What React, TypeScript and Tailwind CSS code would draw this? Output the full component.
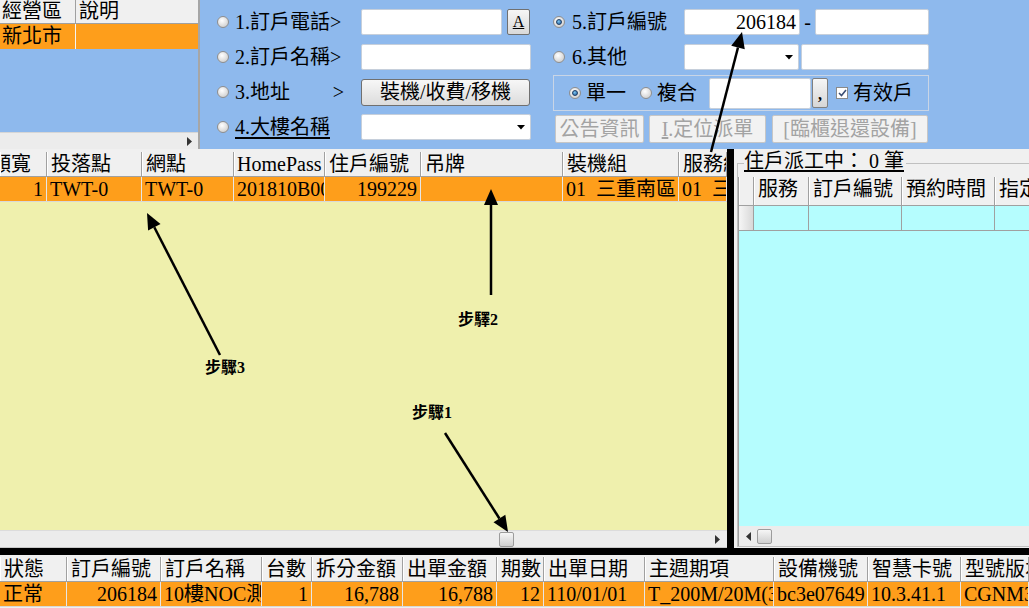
import React from "react";

type Col = { w?: number; t: string; right?: boolean; shift?: number };

const FONT = "font-['Liberation_Serif','Noto_Sans_CJK_TC',serif]";

function Radio({ on }: { on?: boolean }) {
  return (
    <span className="relative inline-block h-[12px] w-[12px] shrink-0 rounded-full border border-[#8e8e8e] bg-[radial-gradient(circle_at_40%_35%,#ffffff,#c4c4c4)]">
      {on && (
        <span className="absolute left-[2px] top-[2px] h-[6px] w-[6px] rounded-full border border-[#1b3c66] bg-[radial-gradient(circle_at_40%_35%,#7cc4f0,#1d5b9c)]" />
      )}
    </span>
  );
}

function Input({ w, h = 26, children }: { w: number; h?: number; children?: React.ReactNode }) {
  return (
    <div
      className="flex shrink-0 items-center justify-end rounded-[2px] border border-[#c6cfdb] bg-white pr-[3px] leading-[24px]"
      style={{ width: w, height: h }}
    >
      {children}
    </div>
  );
}

function Select({ w }: { w: number }) {
  return (
    <div
      className="flex h-[26px] shrink-0 items-center justify-end rounded-[2px] border border-[#c6cfdb] bg-white pr-[5px]"
      style={{ width: w }}
    >
      <svg width="8" height="5" viewBox="0 0 8 5">
        <path d="M0 0H8L4 4.5Z" fill="#000" />
      </svg>
    </div>
  );
}

function ArrowGlyph({ left }: { left?: boolean }) {
  return (
    <svg width="5" height="9" viewBox="0 0 5 9">
      <path d={left ? "M5 0V9L0 4.5Z" : "M0 0V9L5 4.5Z"} fill="#333" />
    </svg>
  );
}

function Thumb() {
  return <div className="h-[15px] w-[15px] rounded-[2px] border border-[#9c9c9c] bg-[linear-gradient(#f6f6f6,#cfcfcf)]" />;
}

function HeadRow({ cols, h = 25 }: { cols: Col[]; h?: number }) {
  return (
    <div className="flex shrink-0 border-b border-[#a0a0a0] bg-[#f0f0f0]" style={{ height: h }}>
      {cols.map((c, i) => (
        <div
          key={i}
          className="shrink-0 overflow-hidden whitespace-nowrap border-l border-white border-r border-r-[#a0a0a0] pl-[3px] leading-[24px]"
          style={c.w ? { width: c.w } : { flex: 1 }}
        >
          <span style={c.shift ? { marginLeft: c.shift } : undefined}>{c.t}</span>
        </div>
      ))}
    </div>
  );
}

function DataRow({ cols, bg = "bg-[#fe9e1b]", h = 25 }: { cols: Col[]; bg?: string; h?: number }) {
  return (
    <div className={`flex shrink-0 border-b border-[#d8d8d8] ${bg}`} style={{ height: h }}>
      {cols.map((c, i) => (
        <div
          key={i}
          className={`shrink-0 overflow-hidden whitespace-pre border-r border-[#e6e6e6] px-[3px] leading-[24px] ${c.right ? "text-right" : ""}`}
          style={c.w ? { width: c.w } : { flex: 1 }}
        >
          {c.t}
        </div>
      ))}
    </div>
  );
}

function Arrow({ x1, y1, x2, y2 }: { x1: number; y1: number; x2: number; y2: number }) {
  const len = Math.hypot(x2 - x1, y2 - y1);
  const ux = (x2 - x1) / len;
  const uy = (y2 - y1) / len;
  const bx = x2 - ux * 16;
  const by = y2 - uy * 16;
  const pts = `${x2},${y2} ${bx - uy * 7},${by + ux * 7} ${bx + uy * 7},${by - ux * 7}`;
  return (
    <g>
      <line x1={x1} y1={y1} x2={bx} y2={by} stroke="#000" strokeWidth={2.5} />
      <polygon points={pts} fill="#000" />
    </g>
  );
}

const mainHead: Col[] = [
  { w: 47, t: "頻寬", shift: -13 },
  { w: 95, t: "投落點" },
  { w: 92, t: "網點" },
  { w: 91, t: "HomePass", shift: -1 },
  { w: 96, t: "住戶編號" },
  { w: 142, t: "吊牌" },
  { w: 116, t: "裝機組" },
  { t: "服務組" },
];
const mainRow: Col[] = [
  { w: 47, t: "1", right: true },
  { w: 95, t: "TWT-0" },
  { w: 92, t: "TWT-0" },
  { w: 91, t: "201810B00" },
  { w: 96, t: "199229", right: true },
  { w: 142, t: "" },
  { w: 116, t: "01  三重南區" },
  { t: "01  三重南區" },
];

const bottomHead: Col[] = [
  { w: 67, t: "狀態" },
  { w: 94, t: "訂戶編號" },
  { w: 101, t: "訂戶名稱" },
  { w: 50, t: "台數" },
  { w: 91, t: "拆分金額" },
  { w: 94, t: "出單金額" },
  { w: 47, t: "期數" },
  { w: 101, t: "出單日期" },
  { w: 129, t: "主週期項" },
  { w: 94, t: "設備機號" },
  { w: 93, t: "智慧卡號" },
  { t: "型號版本" },
];
const bottomRow: Col[] = [
  { w: 67, t: "正常" },
  { w: 94, t: "206184", right: true },
  { w: 101, t: "10樓NOC測試" },
  { w: 50, t: "1", right: true },
  { w: 91, t: "16,788", right: true },
  { w: 94, t: "16,788", right: true },
  { w: 47, t: "12", right: true },
  { w: 101, t: "110/01/01" },
  { w: 129, t: "T_200M/20M(3週" },
  { w: 94, t: "bc3e07649" },
  { w: 93, t: "10.3.41.1" },
  { t: "CGNM3552" },
];

const dispatchHead: Col[] = [
  { w: 15, t: "" },
  { w: 55, t: "服務" },
  { w: 93, t: "訂戶編號" },
  { w: 93, t: "預約時間" },
  { t: "指定日期" },
];

export default function App() {
  return (
    <div className={`relative h-[608px] w-[1029px] overflow-hidden bg-[#f0f0f0] text-[20px] text-black ${FONT}`}>
      {/* search area */}
      <div className="flex h-[149px] bg-[#8eb9ed]">
        {/* region list */}
        <div className="flex w-[200px] shrink-0 flex-col border-r-2 border-[#a6a6a6]">
          <div className="flex h-[24px] shrink-0 border-b border-[#a0a0a0] bg-[#f0f0f0] leading-[23px]">
            <div className="w-[76px] border-r border-[#a0a0a0] pl-[2px]">經營區</div>
            <div className="flex-1 pl-[3px]">說明</div>
          </div>
          <div className="flex h-[25px] shrink-0 bg-[#fe9e1b] leading-[24px]">
            <div className="w-[76px] border-r border-[#f4f4f4] pl-[2px]">新北市</div>
            <div className="flex-1" />
          </div>
          <div className="flex-1" />
          <div className="flex h-[17px] shrink-0 items-center justify-end border-t border-[#d6d6d6] bg-[#ececec] pr-[6px]">
            <ArrowGlyph />
          </div>
        </div>

        {/* query form */}
        <div className="flex pl-[17px]">
          <div className="flex w-[314px] flex-col gap-[9px] pt-[9px]">
            <div className="flex h-[26px] items-center">
              <Radio />
              <span className="ml-[6px] w-[126px] whitespace-nowrap">1.訂戶電話&gt;</span>
              <Input w={141} />
              <div className="ml-[5px] flex h-[26px] w-[23px] items-center justify-center rounded-[2px] border border-[#707070] bg-[linear-gradient(#f6f6f6,#d9d9d9)] text-[16px] leading-none underline">
                A
              </div>
            </div>
            <div className="flex h-[26px] items-center">
              <Radio />
              <span className="ml-[6px] w-[126px] whitespace-nowrap">2.訂戶名稱&gt;</span>
              <Input w={170} />
            </div>
            <div className="flex h-[26px] items-center">
              <Radio />
              <span className="ml-[6px] flex w-[126px] justify-between pr-[17px]">
                <span>3.地址</span>
                <span>&gt;</span>
              </span>
              <div className="flex h-[27px] w-[169px] items-center justify-center rounded-[3px] border border-[#707070] bg-[linear-gradient(#f7f7f7,#dcdcdc)] leading-none">
                裝機/收費/移機
              </div>
            </div>
            <div className="flex h-[26px] items-center">
              <Radio />
              <span className="ml-[6px] w-[126px] whitespace-nowrap underline underline-offset-[3px]">4.大樓名稱</span>
              <Select w={170} />
            </div>
          </div>

          <div className="ml-[22px] flex w-[376px] flex-col pt-[9px]">
            <div className="flex h-[26px] items-center">
              <Radio on />
              <span className="ml-[7px] w-[113px] whitespace-nowrap">5.訂戶編號</span>
              <Input w={116}>206184</Input>
              <span className="w-[15px] text-center">-</span>
              <Input w={114} />
            </div>
            <div className="mt-[9px] flex h-[26px] items-center">
              <Radio />
              <span className="ml-[7px] w-[113px] whitespace-nowrap">6.其他</span>
              <Select w={115} />
              <div className="ml-[2px]">
                <Input w={128} />
              </div>
            </div>
            <div className="mt-[5px] flex h-[36px] items-center border border-[#c9d5e6] pl-[15px]">
              <Radio on />
              <span className="ml-[5px] w-[54px]">單一</span>
              <Radio />
              <span className="ml-[5px] w-[52px]">複合</span>
              <Input w={102} h={31} />
              <div className="ml-[1px] flex h-[30px] w-[16px] items-end justify-center rounded-[2px] border border-[#808080] bg-[linear-gradient(#f6f6f6,#d6d6d6)] pb-[4px] text-[16px] font-bold leading-none">
                ,
              </div>
              <div className="ml-[8px] flex h-[12px] w-[12px] items-center justify-center border border-[#8a8a8a] bg-white">
                <svg width="9" height="8" viewBox="0 0 9 8">
                  <path d="M1 4L3.5 6.5L8 1" fill="none" stroke="#3b4f75" strokeWidth="1.6" />
                </svg>
              </div>
              <span className="ml-[5px]">有效戶</span>
            </div>
            <div className="mt-[4px] flex h-[28px] text-[#a3a3a3]">
              <div className="ml-[2px] flex w-[89px] items-center justify-center rounded-[2px] border border-[#c6c6c6] bg-[#f2f2f2]">公告資訊</div>
              <div className="ml-[5px] flex w-[117px] items-center justify-center rounded-[2px] border border-[#c6c6c6] bg-[#f2f2f2]">
                <span className="underline">I</span>.定位派單
              </div>
              <div className="ml-[6px] flex w-[156px] items-center justify-center rounded-[2px] border border-[#c6c6c6] bg-[#f2f2f2]">[臨櫃退還設備]</div>
            </div>
          </div>
        </div>
      </div>

      {/* work order grid + dispatch list */}
      <div className="flex h-[399px]">
        <div className="flex w-[727px] shrink-0 flex-col pt-[3px]">
          <HeadRow cols={mainHead} />
          <DataRow cols={mainRow} />
          <div className="flex-1 bg-[#eff0ad]" />
          <div className="flex h-[17px] shrink-0 items-center border-t border-[#dcdcdc] bg-[#ececec]">
            <div className="ml-[499px]">
              <Thumb />
            </div>
            <div className="ml-auto mr-[7px]">
              <ArrowGlyph />
            </div>
          </div>
          <div className="h-[1px] shrink-0 bg-[#c8c8c8]" />
        </div>
        <div className="w-[7px] shrink-0 bg-black" />
        <div className="relative flex-1 pt-[14px]">
          <span className="absolute left-[10px] top-[1px] whitespace-pre bg-[#f0f0f0] pr-[2px] leading-[22px] underline underline-offset-[2px]">
            住戶派工中： 0 筆
          </span>
          <div className="ml-[3px] flex h-[384px] flex-col border border-[#c0c0c0] pt-[13px]">
            <div className="flex flex-1 flex-col border-l border-[#a0a0a0]">
              <HeadRow cols={dispatchHead} h={29} />
              <div className="flex h-[25px] shrink-0 border-b border-[#a0a0a0] bg-[#b5fdfe]">
                <div className="w-[15px] shrink-0 border-r border-[#a0a0a0] bg-[linear-gradient(90deg,#f6f6f6,#d8d8d8)]" />
                <div className="w-[55px] shrink-0 border-r border-[#a0a0a0]" />
                <div className="w-[93px] shrink-0 border-r border-[#a0a0a0]" />
                <div className="w-[93px] shrink-0 border-r border-[#a0a0a0]" />
                <div className="flex-1" />
              </div>
              <div className="flex-1 bg-[#b5fdfe]" />
              <div className="flex h-[20px] shrink-0 items-center bg-[#ececec] pl-[7px]">
                <ArrowGlyph left />
                <div className="ml-[6px]">
                  <Thumb />
                </div>
              </div>
            </div>
          </div>
        </div>
      </div>

      <div className="h-[7px] bg-black" />

      {/* billing grid */}
      <div className="pt-[2px]">
        <HeadRow cols={bottomHead} />
        <DataRow cols={bottomRow} />
      </div>

      {/* step annotations */}
      <svg className="pointer-events-none absolute left-0 top-0" width="1029" height="608">
        <Arrow x1={711} y1={152} x2={742} y2={32} />
        <Arrow x1={491} y1={295} x2={491} y2={189} />
        <Arrow x1={220} y1={355} x2={147} y2={213} />
        <Arrow x1={445} y1={433} x2={508} y2={532} />
      </svg>
      <span className="absolute left-[205px] top-[358px] text-[16px] font-bold leading-[20px]">步驟3</span>
      <span className="absolute left-[458px] top-[310px] text-[16px] font-bold leading-[20px]">步驛2</span>
      <span className="absolute left-[412px] top-[403px] text-[16px] font-bold leading-[20px]">步驟1</span>
    </div>
  );
}
